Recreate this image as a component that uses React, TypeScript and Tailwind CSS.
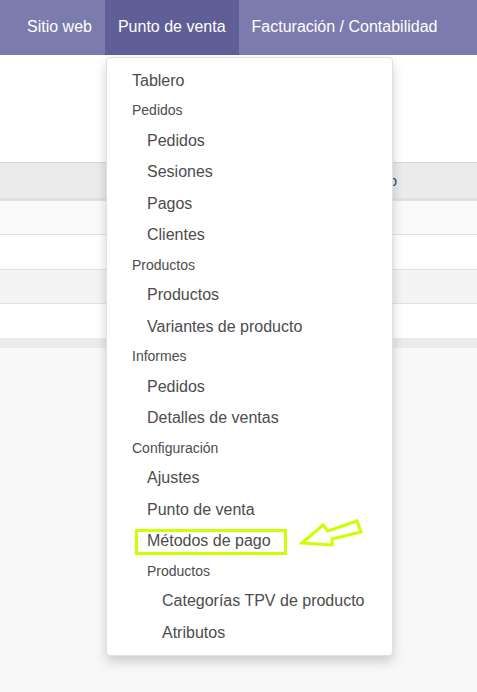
const font = { fontFamily: '"Liberation Sans", Arial, sans-serif' };

type Entry = { label: string; kind: 'item' | 'header'; level: number; mark?: boolean };

const entries: Entry[] = [
  { label: 'Tablero', kind: 'item', level: 0 },
  { label: 'Pedidos', kind: 'header', level: 0 },
  { label: 'Pedidos', kind: 'item', level: 1 },
  { label: 'Sesiones', kind: 'item', level: 1 },
  { label: 'Pagos', kind: 'item', level: 1 },
  { label: 'Clientes', kind: 'item', level: 1 },
  { label: 'Productos', kind: 'header', level: 0 },
  { label: 'Productos', kind: 'item', level: 1 },
  { label: 'Variantes de producto', kind: 'item', level: 1 },
  { label: 'Informes', kind: 'header', level: 0 },
  { label: 'Pedidos', kind: 'item', level: 1 },
  { label: 'Detalles de ventas', kind: 'item', level: 1 },
  { label: 'Configuración', kind: 'header', level: 0 },
  { label: 'Ajustes', kind: 'item', level: 1 },
  { label: 'Punto de venta', kind: 'item', level: 1 },
  { label: 'Métodos de pago', kind: 'item', level: 1, mark: true },
  { label: 'Productos', kind: 'header', level: 1 },
  { label: 'Categorías TPV de producto', kind: 'item', level: 2 },
  { label: 'Atributos', kind: 'item', level: 2 },
];

const indent = ['pl-[25px]', 'pl-[40px]', 'pl-[55px]'];

const MenuEntry = ({ entry }: { entry: Entry }) => {
  if (entry.kind === 'header') {
    return (
      <div className={`h-[28.5px] flex items-center text-[14px] text-[#4c4c4c] ${indent[entry.level]}`}>
        {entry.label}
      </div>
    );
  }
  return (
    <div className={`relative h-[31.5px] flex items-center text-[16px] text-[#4c4c4c] ${indent[entry.level]}`}>
      {entry.label}
      {entry.mark && (
        <div className="absolute left-[28px] top-[3px] w-[152px] h-[26px] border-[3px] border-[#ccff00]" />
      )}
    </div>
  );
};

const App = () => {
  return (
    <div className="relative w-[477px] h-[692px] overflow-hidden bg-[#f8f8f8]" style={font}>
      {/* Top nav */}
      <div className="flex h-[55px] bg-[#7c7bad] pl-[14px] text-white text-[16px]">
        <div className="flex items-center px-[13px] pb-[1px]">Sitio web</div>
        <div className="flex items-center px-[13px] pb-[1px] bg-[#5f5e97]">Punto de venta</div>
        <div className="flex items-center px-[13px] pb-[1px]">Facturación / Contabilidad</div>
      </div>

      {/* Page behind the menu */}
      <div className="h-[107px] bg-white" />
      <div className="border-t border-[#d8d8d8]">
        <div className="h-[35px] bg-[#ebebeb] flex items-center justify-end pr-[80px] pt-[1px] text-[14px] text-[#2c4a7a]">
          Monto
        </div>
        <div className="h-[3px] bg-[#dee2e6]" />
        <div className="h-[34px] bg-[#fafafa] border-b border-[#e2e2e2]" />
        <div className="h-[35px] bg-white border-b border-[#e2e2e2]" />
        <div className="h-[34px] bg-[#f4f4f4] border-b border-[#e2e2e2]" />
        <div className="h-[34px] bg-white" />
        <div className="h-[10px] bg-[#ebebeb]" />
      </div>

      {/* Dropdown */}
      <div className="absolute left-[106px] top-[57px] w-[287px] bg-white border border-[#e0e0e0] rounded-[4px] pt-[7px] pb-[6px] shadow-[0_6px_12px_rgba(0,0,0,0.175)]">
        {entries.map((e, i) => (
          <MenuEntry key={i} entry={e} />
        ))}
      </div>

      {/* Annotation arrow */}
      <svg className="absolute left-0 top-0" width="477" height="692" viewBox="0 0 477 692">
        <polygon
          points="302,543 323,525 328,531 357,521 361,532 332,539 332,545"
          fill="none"
          stroke="#ccff00"
          strokeWidth="3"
          strokeLinejoin="miter"
        />
      </svg>
    </div>
  );
};

export default App;
